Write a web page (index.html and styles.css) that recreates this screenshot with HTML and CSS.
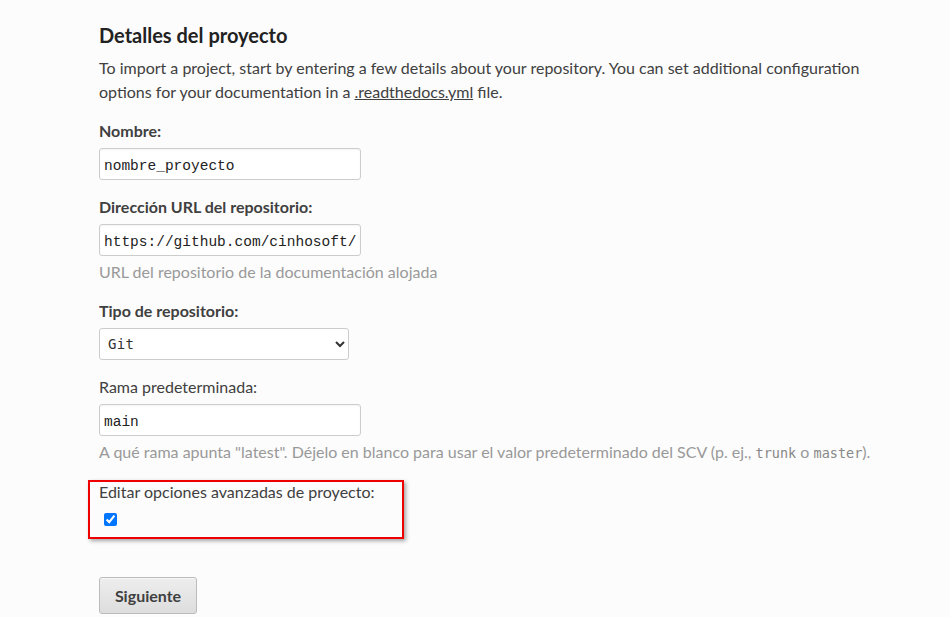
FILE: index.html
```html
<!DOCTYPE html>
<html lang="es">
<head>
<meta charset="utf-8">
<title>Detalles del proyecto</title>
<link rel="stylesheet" href="styles.css">
</head>
<body>
<main class="page">
  <h2 class="title">Detalles del proyecto</h2>
  <p class="intro">To import a project, start by entering a few details about your repository. You can set additional configuration options for your documentation in a <a href="#">.readthedocs.yml</a> file.</p>
  <form class="form">
    <div class="field">
      <label class="label bold">Nombre:</label>
      <input class="input" type="text" value="nombre_proyecto">
    </div>
    <div class="field">
      <label class="label bold">Dirección URL del repositorio:</label>
      <input class="input" type="text" value="https://github.com/cinhosoft/docs">
      <span class="help">URL del repositorio de la documentación alojada</span>
    </div>
    <div class="field">
      <label class="label bold">Tipo de repositorio:</label>
      <select class="select"><option>Git</option></select>
    </div>
    <div class="field">
      <label class="label">Rama predeterminada:</label>
      <input class="input" type="text" value="main">
      <span class="help">A qué rama apunta "latest". Déjelo en blanco para usar el valor predeterminado del SCV (p. ej., <code>trunk</code> o <code>master</code>).</span>
    </div>
    <div class="highlight">
      <label class="label hl-label">Editar opciones avanzadas de proyecto:</label>
      <input class="check" type="checkbox" checked>
    </div>
    <button class="btn" type="button">Siguiente</button>
  </form>
</main>
</body>
</html>
```
FILE: styles.css
```css
html, body {
  margin: 0;
  padding: 0;
  background: #fcfcfc;
}
body {
  font-family: Lato, "Open Sans", sans-serif;
  color: #404040;
  font-size: 16px;
}
.page {
  padding: 22px 0 0 99px;
  width: 775px;
}
.title {
  margin: 0 0 8px;
  font-size: 20px;
  font-weight: 700;
  color: #222;
  line-height: 26px;
}
.intro {
  margin: 0 0 15px;
  line-height: 24px;
  font-size: 16px;
}
.intro a {
  color: #404040;
  text-decoration: underline;
}
.form {
  display: flex;
  flex-direction: column;
  align-items: flex-start;
}
.field {
  display: flex;
  flex-direction: column;
  align-items: flex-start;
  margin-bottom: 15px;
}
.label {
  font-size: 16px;
  line-height: 24px;
  margin-bottom: 5px;
  color: #404040;
}
.bold { font-weight: 700; }
.input {
  box-sizing: border-box;
  width: 262px;
  height: 32px;
  border: 1px solid #ccc;
  border-radius: 3px;
  background: #fff;
  box-shadow: inset 0 1px 2px rgba(0,0,0,0.05);
  padding: 3px 4px 0;
  font-family: "Liberation Mono", "DejaVu Sans Mono", monospace;
  font-size: 14.5px;
  line-height: 24px;
  color: #222;
  margin: 0;
}
.select {
  box-sizing: border-box;
  width: 250px;
  height: 32px;
  border: 1px solid #ccc;
  border-radius: 3px;
  background: #fff;
  padding: 0 4px;
  font-family: "DejaVu Sans Mono", "Liberation Mono", monospace;
  font-size: 14px;
  letter-spacing: 0.3px;
  color: #333;
  margin: 0;
}
.help {
  display: block;
  margin-top: 4px;
  font-size: 16px;
  line-height: 24px;
  color: #999;
}
.help code {
  font-family: "DejaVu Sans Mono", "Liberation Mono", monospace;
  font-size: 13.5px;
  color: #888;
}
.highlight {
  display: flex;
  flex-direction: column;
  align-items: flex-start;
  border: 2px solid #e00;
  box-shadow: 2px 2px 4px rgba(0,0,0,0.35);
  margin-left: -11px;
  padding: 0 27px 11px 9px;
  margin-top: 0;
  margin-bottom: 38px;
}
.hl-label {
  line-height: 20px;
  margin-bottom: 0;
}
.check {
  width: 13px;
  height: 13px;
  margin: 11px 0 0 5px;
  accent-color: #0075ff;
}
.btn {
  font-family: Lato, sans-serif;
  font-weight: 700;
  font-size: 16px;
  color: #404040;
  padding: 0 14px;
  height: 37px;
  width: 98px;
  border: 1px solid #bbb;
  border-radius: 3px;
  background: linear-gradient(#eee, #ddd);
  box-shadow: inset 0 1px 0 rgba(255,255,255,0.5);
}
```
